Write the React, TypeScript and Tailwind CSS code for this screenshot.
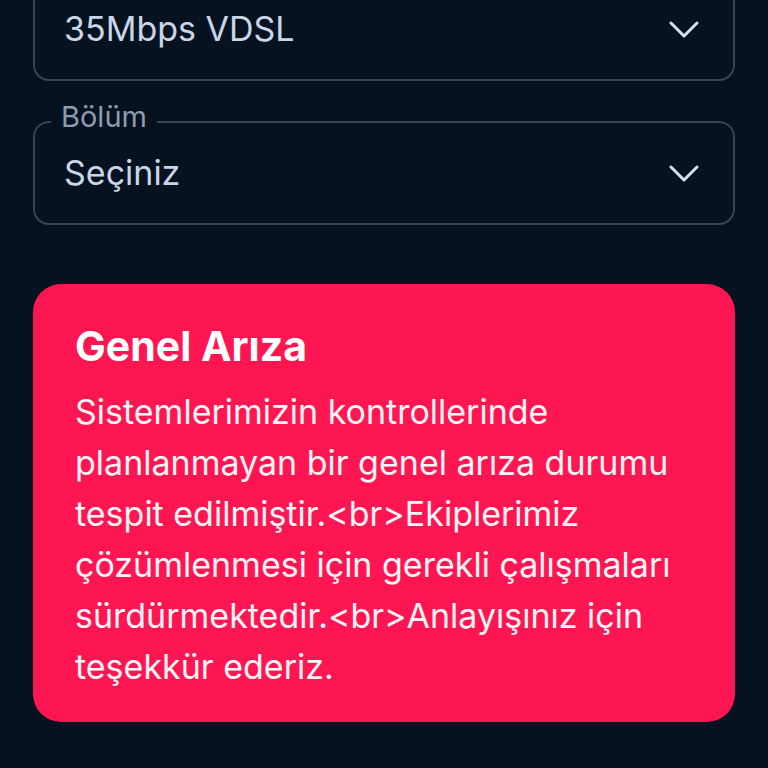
import React from 'react';

const ChevronDown: React.FC = () => (
  <svg width="30" height="17" viewBox="0 0 30 17" fill="none" className="shrink-0">
    <path d="M2 2 L15 15 L28 2" stroke="#d5e0ee" strokeWidth="3" strokeLinecap="round" strokeLinejoin="round" />
  </svg>
);

type SelectFieldProps = {
  label?: string;
  value: string;
};

const SelectField: React.FC<SelectFieldProps> = ({ label, value }) => (
  <div className="relative flex h-[104px] items-center justify-between rounded-[16px] border-2 border-[#384558] pl-[29px] pr-[34px]">
    {label && (
      <span className="absolute -top-[21px] left-[16px] bg-[#06121f] px-[10px] text-[29px] leading-[29px] text-[#8e9cb0]">
        {label}
      </span>
    )}
    <span className="text-[34px] leading-[40px] text-[#c9d6e7]">{value}</span>
    <ChevronDown />
  </div>
);

export default function App() {
  return (
    <div
      className="h-[768px] overflow-hidden bg-[#06121f] px-[33px]"
      style={{ fontFamily: 'Inter, "Noto Sans", sans-serif' }}
    >
      {/* page is scrolled: the first field's top edge sits above the viewport */}
      <div className="-mt-[23px] flex flex-col gap-[40px]">
        <SelectField value="35Mbps VDSL" />
        <SelectField label="Bölüm" value="Seçiniz" />
      </div>

      <div className="mt-[59px] rounded-[28px] bg-[#fe1652] px-[42px] pt-[37px] pb-[30px] text-white">
        <h2 className="text-[41px] font-bold leading-[50px]">Genel Arıza</h2>
        <p className="mt-[15px] text-[34px] leading-[51px] text-[#fff4f6]">
          Sistemlerimizin kontrollerinde planlanmayan bir genel arıza durumu tespit edilmiştir.&lt;br&gt;Ekiplerimiz
          çözümlenmesi için gerekli çalışmaları sürdürmektedir.&lt;br&gt;Anlayışınız için teşekkür ederiz.
        </p>
      </div>
    </div>
  );
}
